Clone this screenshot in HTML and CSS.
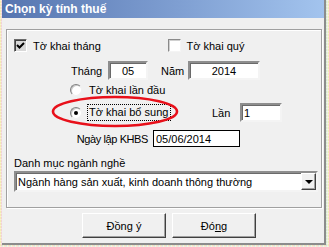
FILE: index.html
```html
<!DOCTYPE html>
<html lang="vi">
<head>
    <meta charset="UTF-8">
    <meta name="viewport" content="width=device-width, initial-scale=1.0">
    <link rel="stylesheet" href="styles.css">
    <title>Chọn kỳ tính thuế</title>
</head>
<body>
    <div class="window">
        <div class="titlebar">Chọn kỳ tính thuế</div>

        <div class="group">
            <div class="row row-check">
                <label class="check-item">
                    <span class="check checked">
                        <svg width="9" height="9" viewBox="0 0 9 9"><path d="M1 4 L3.5 6.5 L8 2" fill="none" stroke="#000" stroke-width="2"/></svg>
                    </span>
                    Tờ khai tháng
                </label>
                <label class="check-item">
                    <span class="check"></span>
                    Tờ khai quý
                </label>
            </div>

            <div class="row row-period">
                <span class="lbl lbl-month">Tháng</span>
                <input class="field field-center field-month" value="05">
                <span class="lbl lbl-year">Năm</span>
                <input class="field field-center field-year" value="2014">
            </div>

            <div class="row row-first">
                <span class="radio"></span>
                <span class="radio-text">Tờ khai lần đầu</span>
            </div>

            <div class="row row-extra">
                <div class="radio-item">
                    <span class="radio selected"></span>
                    <span class="radio-text focus">Tờ khai bổ sung</span>
                </div>
                <span class="lbl lbl-times">Lần</span>
                <input class="field field-times" value="1">
            </div>

            <div class="row row-date">
                <span class="lbl lbl-date">Ngày lập KHBS</span>
                <input class="field-date" value="05/06/2014">
            </div>

            <div class="row row-cat">Danh mục ngành nghề</div>

            <div class="combo">
                <span class="combo-text">Ngành hàng sản xuất, kinh doanh thông thường</span>
                <span class="combo-btn"><span class="arrow"></span></span>
            </div>
        </div>

        <div class="buttons">
            <button class="btn">Đồng ý</button>
            <button class="btn">Đó<u>n</u>g</button>
        </div>

        <!-- red mark drawn over the dialog -->
        <svg class="highlight" width="130" height="34" viewBox="0 0 130 34">
            <ellipse cx="64" cy="16.5" rx="62" ry="14.5" fill="none" stroke="#e8101a" stroke-width="2.6"/>
        </svg>
    </div>
</body>
</html>
```

FILE: styles.css
```css
body {
    margin: 0;
    width: 329px;
    height: 247px;
    overflow: hidden;
    font-family: 'Liberation Sans', Arial, sans-serif;
    font-size: 11px;
    color: #000;
    background:
        repeating-linear-gradient(0deg, rgba(255, 255, 255, 0.35) 0 1px, transparent 1px 3px),
        repeating-linear-gradient(90deg, #f3ecb4 0 1px, #f1d3d6 1px 2px, #d6ebcc 2px 3px, #ecece4 3px 4px);
}

.window {
    position: relative;
    margin-left: 2px;
    width: 324px;
    height: 245px;
    box-sizing: border-box;
    background-color: #f0f0f0;
    border-right: 2px solid #8c8c8c;
    border-bottom: 2px solid #8c8c8c;
}

.titlebar {
    height: 18px;
    line-height: 18px;
    padding-left: 3px;
    color: #fff;
    font-weight: bold;
    font-size: 12px;
    background: linear-gradient(90deg, #5675b0, #7f9fd2 55%, #a3c4ee);
}

.group {
    margin: 11px 0 0 4px;
    width: 316px;
    height: 179px;
    box-sizing: border-box;
    border: 1px solid #a0a0a0;
    box-shadow: inset 1px 1px 0 #fff, 1px 1px 0 #fff;
}

.row {
    display: flex;
    align-items: center;
}

.row-check {
    margin-top: 9px;
    height: 13px;
    padding-left: 7px;
}

.check-item {
    display: flex;
    align-items: center;
    width: 159px;
}

.check {
    display: inline-flex;
    align-items: center;
    justify-content: center;
    width: 13px;
    height: 13px;
    box-sizing: border-box;
    margin-right: 6px;
    background-color: #fff;
    border: 1px solid;
    border-color: #8a8a8a #f4f4f4 #f4f4f4 #8a8a8a;
    box-shadow: inset 1px 1px 0 #d0d0d0;
}

.check.checked {
    background-color: #d8d8d8;
    border-color: #6a6a6a #fff #fff #6a6a6a;
    box-shadow: inset 1px 1px 0 #404040;
}

.row-period {
    margin-top: 9px;
    height: 19px;
    padding-left: 64px;
}

.lbl-month {
    width: 37px;
}

.lbl-year {
    width: 27px;
    margin-left: 13px;
}

.field {
    height: 19px;
    box-sizing: border-box;
    padding: 0 2px;
    font-family: inherit;
    font-size: 11px;
    color: #000;
    background-color: #fff;
    border: 2px solid;
    border-color: #8e8e8e #f4f4f4 #f4f4f4 #8e8e8e;
    box-shadow: inset 1px 1px 0 #6a6a6a;
    outline: none;
}

.field-center {
    text-align: center;
}

.field-month {
    width: 40px;
}

.field-year {
    width: 72px;
}

.row-first {
    margin-top: 4px;
    height: 12px;
    padding-left: 63px;
}

.radio {
    position: relative;
    display: inline-block;
    width: 12px;
    height: 12px;
    box-sizing: border-box;
    margin-right: 7px;
    border-radius: 50%;
    background-color: #fff;
    border: 1px solid;
    border-color: #808080 #f0f0f0 #f0f0f0 #808080;
    box-shadow: inset 1px 1px 0 #c8c8c8;
}

.radio.selected {
    margin-right: 5px;
}

.radio.selected::after {
    content: "";
    position: absolute;
    left: 3px;
    top: 3px;
    width: 4px;
    height: 4px;
    border-radius: 50%;
    background-color: #000;
}

.row-extra {
    margin-top: 7px;
    height: 19px;
    padding-left: 63px;
}

.radio-item {
    display: flex;
    align-items: center;
    width: 142px;
}

.focus {
    height: 17px;
    line-height: 15px;
    box-sizing: border-box;
    padding: 0 2px 0 1px;
    border: 1px dotted #000;
}

.lbl-times {
    width: 28px;
}

.field-times {
    width: 42px;
}

.row-date {
    margin-top: 8px;
    height: 17px;
}

.lbl-date {
    width: 141px;
    margin-right: 5px;
    text-align: right;
    white-space: nowrap;
    letter-spacing: -0.4px;
}

.field-date {
    width: 87px;
    height: 17px;
    box-sizing: border-box;
    padding: 0 2px;
    font-family: inherit;
    font-size: 11px;
    background-color: #fff;
    border: 1px solid #000;
    outline: none;
}

.row-cat {
    margin-top: 9px;
    height: 13px;
    padding-left: 7px;
}

.combo {
    display: flex;
    align-items: center;
    justify-content: space-between;
    margin: 2px 0 0 7px;
    width: 304px;
    height: 21px;
    box-sizing: border-box;
    background-color: #fff;
    border: 2px solid;
    border-color: #8e8e8e #f4f4f4 #f4f4f4 #8e8e8e;
    box-shadow: inset 1px 1px 0 #6a6a6a;
}

.combo-text {
    padding-left: 2px;
}

.combo-btn {
    display: flex;
    align-items: center;
    justify-content: center;
    width: 15px;
    height: 17px;
    box-sizing: border-box;
    background-color: #f0f0f0;
    border: 1px solid;
    border-color: #fff #404040 #404040 #fff;
    box-shadow: inset -1px -1px 0 #a0a0a0;
}

.arrow {
    width: 0;
    height: 0;
    border-left: 4px solid transparent;
    border-right: 4px solid transparent;
    border-top: 4px solid #000;
}

.buttons {
    display: flex;
    gap: 6px;
    margin-top: 5px;
    padding-left: 80px;
}

.btn {
    width: 84px;
    height: 25px;
    padding: 0;
    font-family: inherit;
    font-size: 11px;
    color: #000;
    background-color: #f0f0f0;
    border: 1px solid;
    border-color: #fff #404040 #404040 #fff;
    box-shadow: inset -1px -1px 0 #a0a0a0;
    cursor: pointer;
}

.btn u {
    text-decoration: underline;
}

.highlight {
    position: absolute;
    left: 49px;
    top: 95px;
}
```
